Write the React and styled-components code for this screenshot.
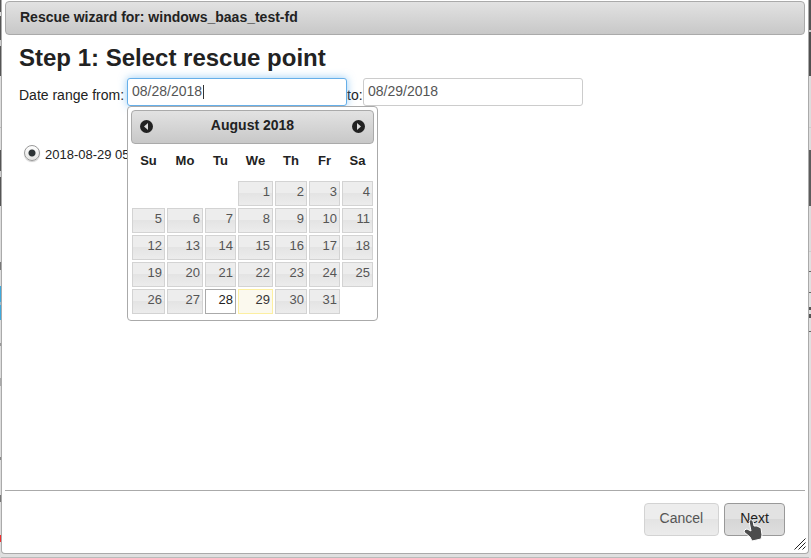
import { useState } from "react";
import styled, { createGlobalStyle } from "styled-components";

const GlobalStyle = createGlobalStyle`
  * {
    box-sizing: border-box;
  }

  body {
    margin: 0;
    overflow: hidden;
    background: #e0e0e0;
    color: #222;
    font-family: "Liberation Sans", Arial, sans-serif;
    font-size: 14px;
    line-height: 20px;
  }

  button,
  input {
    font-family: inherit;
    font-size: inherit;
    line-height: inherit;
  }
`;

// slivers of the page that stay visible around the dialog
const Page = styled.div`
  display: flex;
  min-height: 100vh;
  padding: 0 2px 4px 1px;
  background:
    linear-gradient(
        #555 0 12px, #ddd 12px 16px, #555 16px 40px, #ccc 40px 46px,
        #555 46px 76px, #ddd 76px 127px, #bbb 127px 128px, #ddd 128px 150px,
        #555 150px 171px, #ccc 171px 177px, #555 177px 206px, #ddd 206px 262px,
        #777 262px 270px, #ddd 270px 286px, #3fa9dc 286px 302px,
        #9bc 302px 305px, #3fa9dc 305px 320px, #ddd 320px 343px,
        #999 343px 346px, #ddd 346px 378px, #aaa 378px 386px, #ddd 386px 457px,
        #888 457px 460px, #ddd 460px 495px, #777 495px 502px, #ddd 502px 535px,
        #f03030 535px 542px, #ddd 542px
      )
      left top / 1px 100% no-repeat,
    linear-gradient(
        #555 0 30px, #ccc 30px 32px, #505050 32px 76px, #ddd 76px 127px,
        #ccc 127px 128px, #ddd 128px 150px, #5c5c5c 150px 206px,
        #ddd 206px 251px, #ccc 251px 252px, #e0e0e0 252px 271px,
        #666 271px 272px, #e0e0e0 272px 292px, #666 292px 293px,
        #e0e0e0 293px 307px, #555 307px 310px, #e0e0e0 310px 314px,
        #555 314px 318px, #e0e0e0 318px 331px, #666 331px 332px, #e0e0e0 332px
      )
      right top / 2px 100% no-repeat,
    linear-gradient(#bbb, #bbb) left bottom / 100% 1px no-repeat,
    #e0e0e0;
`;

const Dialog = styled.section`
  position: relative;
  display: flex;
  flex: 1;
  flex-direction: column;
  padding: 1px 3px 0;
  border: 1px solid #aaa;
  border-top: 0;
  border-radius: 0 0 4px 4px;
  background: #fff;
`;

const Bar = styled.header`
  border: 1px solid #aaa;
  border-radius: 4px;
  background: linear-gradient(#e2e2e2, #c8c8c8);
  font-weight: bold;
`;

const TitleBar = styled(Bar)`
  height: 34px;
  padding: 5px 14px;
`;

const Content = styled.main`
  flex: 1;
  padding: 9px 14px;
`;

const Heading = styled.h1`
  margin: 0 0 6px;
  font-size: 24px;
  line-height: 28px;
`;

const DateRange = styled.div`
  display: grid;
  grid-template-columns: 108px 220px 16px 220px;
  align-items: start;
`;

const DateLabel = styled.label`
  padding-top: 7px;
  white-space: nowrap;
`;

const DateField = styled.div`
  position: relative;
`;

const DateInput = styled.input`
  display: block;
  width: 100%;
  height: 28px;
  padding: 2px 4px 4px;
  border: 1px solid ${(props) => (props.$active ? "#66afe9" : "#ccc")};
  border-radius: 3px;
  outline: none;
  background: #fff;
  box-shadow: ${(props) =>
    props.$active ? "0 0 8px rgba(82, 168, 236, 0.6)" : "none"};
  color: #555;
`;

const Caret = styled.span`
  position: absolute;
  top: 7px;
  left: 76px;
  width: 1px;
  height: 14px;
  background: #333;
`;

const Picker = styled.div`
  position: absolute;
  z-index: 1;
  top: 100%;
  left: 0;
  width: 251px;
  padding: 3px 3px 5px;
  border: 1px solid #aaa;
  border-radius: 4px;
  background: #fff;
`;

const PickerHeader = styled(Bar)`
  display: flex;
  align-items: center;
  justify-content: space-between;
  height: 34px;
  padding: 0 8px 4px;
`;

const ArrowButton = styled.button`
  display: flex;
  padding: 2px 0 0;
  border: 0;
  background: none;
`;

const Calendar = styled.table`
  width: 100%;
  table-layout: fixed;
  border-collapse: collapse;
  font-size: 13px;
`;

const WeekDay = styled.th`
  width: ${(props) => props.$width}px;
  height: 36px;
  padding: 0 0 2px;
`;

const DayCell = styled.td`
  height: 27px;
  padding: 1px;
`;

const dayLooks = {
  normal: `
    border-color: #d3d3d3;
    background: linear-gradient(#ededed 50%, #e4e4e4 50%, #ececec);
    color: #555;
  `,
  selected: `
    border-color: #aaa;
    background: #fff;
    color: #212121;
  `,
  today: `
    border-color: #fcefa1;
    background: #fbf9ee;
    color: #363636;
  `,
};

const Day = styled.button`
  display: block;
  width: 100%;
  height: 25px;
  padding: 0 2px 3px;
  border: 1px solid;
  text-align: right;
  ${(props) => dayLooks[props.$look]}
`;

const RescuePoint = styled.div`
  display: flex;
  align-items: flex-start;
  gap: 5px;
  margin-top: 39px;
  padding-left: 5px;
  font-size: 13px;
  line-height: 20px;
`;

const Radio = styled.input`
  appearance: none;
  width: 16px;
  height: 16px;
  margin: 0;
  border: 1px solid #999;
  border-radius: 50%;
  background: radial-gradient(circle, #2e3436 0 3px, transparent 4px),
    linear-gradient(#fff, #e4e4e2);
  box-shadow: 0 1px 1px #ccc;
`;

const Footer = styled.footer`
  display: flex;
  justify-content: flex-end;
  gap: 5px;
  padding: 12px 20px 17px;
  border-top: 1px solid #aaa;
`;

const Button = styled.button`
  height: 33px;
  padding: 0 15px 3px;
  border: 1px solid ${(props) => (props.$hover ? "#999" : "#d3d3d3")};
  border-radius: 4px;
  background: ${(props) =>
    props.$hover
      ? "linear-gradient(#e2e2e2 50%, #d6d6d6 50%, #dedede)"
      : "linear-gradient(#ededed 50%, #e4e4e4 50%, #ececec)"};
  color: ${(props) => (props.$hover ? "#212121" : "#555")};
`;

const NextWrapper = styled.div`
  position: relative;
`;

const Pointer = styled.svg`
  position: absolute;
  top: 15px;
  right: 22px;
  pointer-events: none;
`;

const Grip = styled.svg`
  position: absolute;
  right: 2px;
  bottom: 3px;
`;

const weekDays = [
  { name: "Su", width: 35 },
  { name: "Mo", width: 38 },
  { name: "Tu", width: 33 },
  { name: "We", width: 37 },
  { name: "Th", width: 34 },
  { name: "Fr", width: 33 },
  { name: "Sa", width: 33 },
];

// August 2018 starts on a Wednesday
const weeks = Array.from({ length: 5 }, (_, week) =>
  Array.from({ length: 7 }, (_, day) => {
    const date = week * 7 + day - 2;
    return date > 0 && date <= 31 ? date : null;
  })
);

export default function App() {
  const [from, setFrom] = useState("08/28/2018");
  const [to, setTo] = useState("08/29/2018");

  return (
    <>
      <GlobalStyle />
      <Page>
        <Dialog role="dialog" aria-labelledby="title">
          <TitleBar id="title">
            Rescue wizard for: windows_baas_test-fd
          </TitleBar>
          <Content>
            <Heading>Step 1: Select rescue point</Heading>
            <DateRange>
              <DateLabel htmlFor="from">Date range from:</DateLabel>
              <DateField>
                <DateInput
                  id="from"
                  $active
                  value={from}
                  onChange={(e) => setFrom(e.target.value)}
                />
                <Caret />
                <DatePicker month={8} year={2018} selected={28} onSelect={setFrom} />
              </DateField>
              <DateLabel htmlFor="to">to:</DateLabel>
              <DateInput
                id="to"
                value={to}
                onChange={(e) => setTo(e.target.value)}
              />
            </DateRange>
            <RescuePoint>
              <Radio type="radio" name="point" id="point" defaultChecked />
              <label htmlFor="point">2018-08-29 05</label>
            </RescuePoint>
          </Content>
          <Footer>
            <Button type="button">Cancel</Button>
            <NextWrapper>
              <Button type="button" $hover>
                Next
              </Button>
              <HandPointer />
            </NextWrapper>
          </Footer>
          <Grip width="12" height="12" viewBox="0 0 12 12">
            <path
              d="M0.5 11.5 L11.5 0.5 M4.5 11.5 L11.5 4.5 M8.5 11.5 L11.5 8.5"
              stroke="#222"
              fill="none"
            />
          </Grip>
        </Dialog>
      </Page>
    </>
  );
}

function DatePicker({ month, year, selected, onSelect }) {
  function getLook(date) {
    if (date === selected) return "selected";
    if (date === 29) return "today";
    return "normal";
  }

  return (
    <Picker>
      <PickerHeader>
        <ArrowButton type="button" aria-label="Prev">
          <ArrowIcon d="M8 3 L4 6.5 L8 10 Z" />
        </ArrowButton>
        <span>August {year}</span>
        <ArrowButton type="button" aria-label="Next">
          <ArrowIcon d="M5 3 L9 6.5 L5 10 Z" />
        </ArrowButton>
      </PickerHeader>
      <Calendar>
        <thead>
          <tr>
            {weekDays.map(({ name, width }) => (
              <WeekDay key={name} $width={width}>
                {name}
              </WeekDay>
            ))}
          </tr>
        </thead>
        <tbody>
          {weeks.map((week, i) => (
            <tr key={i}>
              {week.map((date, j) => (
                <DayCell key={j}>
                  {date && (
                    <Day
                      type="button"
                      $look={getLook(date)}
                      onClick={() =>
                        onSelect(
                          `0${month}/${String(date).padStart(2, "0")}/${year}`
                        )
                      }
                    >
                      {date}
                    </Day>
                  )}
                </DayCell>
              ))}
            </tr>
          ))}
        </tbody>
      </Calendar>
    </Picker>
  );
}

function ArrowIcon({ d }) {
  return (
    <svg width="13" height="13" viewBox="0 0 13 13">
      <circle cx="6.5" cy="6.5" r="6.5" fill="#222" />
      <path d={d} fill="#ddd" />
    </svg>
  );
}

function HandPointer() {
  return (
    <Pointer width="20" height="24" viewBox="0 0 20 24">
      <path
        d="M6 3 Q8 0 10 3 L11 8 L14 8 L18 10 L19 17 L18 21 L9 23 L7 19 L1 14 Q1 11 4 11 L8 13 Z"
        fill="#4d4d4d"
        stroke="#fff"
        strokeWidth="1"
        strokeLinejoin="round"
      />
    </Pointer>
  );
}
